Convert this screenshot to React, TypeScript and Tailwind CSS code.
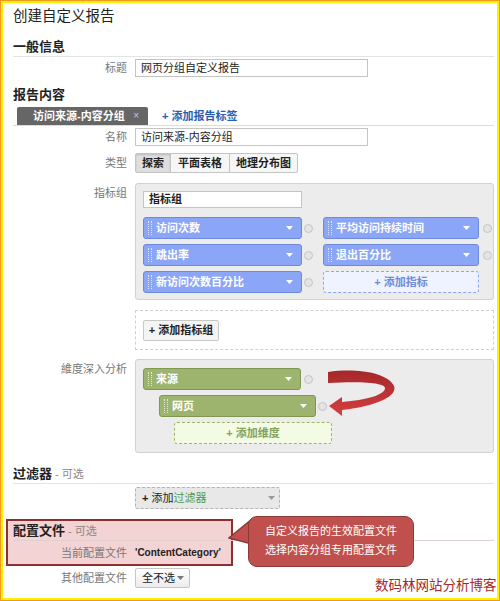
import React from "react";

// --- DATA ---
const METRICS_LEFT = ["访问次数", "跳出率", "新访问次数百分比"];
const METRICS_RIGHT = ["平均访问持续时间", "退出百分比"];

function Caret({ color = "#ffffff" }: { color?: string }) {
  return (
    <svg width="7" height="4" viewBox="0 0 7 4" className="shrink-0">
      <path d="M0 0h7L3.5 4z" fill={color} />
    </svg>
  );
}

function Grip() {
  return <div className="h-[14px] w-[4px] shrink-0 border-x border-dotted border-white/70" />;
}

function Knob() {
  return <div className="h-[9px] w-[9px] shrink-0 rounded-full border border-[#c4c4c4] bg-[#e4e4e4]" />;
}

function Label({ children, className = "" }: { children: React.ReactNode; className?: string }) {
  return (
    <div className={`w-[114px] shrink-0 text-right text-[11px] leading-[18px] text-[#777] ${className}`}>
      {children}
    </div>
  );
}

function MetricPill({ label, wide }: { label: string; wide: boolean }) {
  return (
    <div
      className={`flex h-[22px] items-center rounded-[3px] border border-[#6d89da] bg-[#8ba6f6] pl-[4px] pr-[8px] ${
        wide ? "w-[159px]" : "w-[156px]"
      }`}
    >
      <Grip />
      <span className="ml-[4px] flex-1 text-[11px] font-bold leading-none text-white">{label}</span>
      <Caret />
    </div>
  );
}

function DimPill({ label, className }: { label: string; className: string }) {
  return (
    <div className={`flex h-[22px] items-center rounded-[3px] border border-[#7e9851] bg-[#9db46e] pl-[4px] pr-[8px] ${className}`}>
      <Grip />
      <span className="ml-[4px] flex-1 text-[11px] font-bold leading-none text-white">{label}</span>
      <Caret />
    </div>
  );
}

export default function App() {
  return (
    <div className="h-[601px] w-[500px] border border-[#f39a1e] bg-white font-['Liberation_Sans','Noto_Sans_CJK_SC',sans-serif] text-[#222]">
      <div className="relative h-full border-2 border-[#fff100] pl-[10px] pr-[3px]">
        {/* --- 标题 --- */}
        <div className="mt-[3px] text-[14.5px] leading-[20px]">创建自定义报告</div>

        {/* --- 一般信息 --- */}
        <div className="mt-[12px] border-b border-[#e3e3e3] text-[13px] font-bold leading-[18px]">一般信息</div>
        <div className="mt-[2px] flex items-center">
          <Label>标题</Label>
          <div className="ml-[8px] flex h-[18px] w-[233px] items-center border border-[#c4c4c4] bg-white pl-[5px] text-[11px]">
            网页分组自定义报告
          </div>
        </div>

        {/* --- 报告内容 --- */}
        <div className="mt-[9px] text-[13px] font-bold leading-[18px]">报告内容</div>
        <div className="mt-[3px] flex h-[19px] items-start border-b border-[#dcdcdc]">
          <div className="ml-[4px] flex h-[18px] w-[131px] items-center rounded-t-[2px] bg-[#666666] pl-[16px] pr-[9px]">
            <span className="flex-1 text-[11px] font-bold leading-none text-white">访问来源-内容分组</span>
            <span className="text-[10px] leading-none text-[#c8c8c8]">×</span>
          </div>
          <div className="ml-[14px] flex h-[18px] items-center text-[11px] font-bold text-[#2a5db0]">+ 添加报告标签</div>
        </div>

        <div className="mt-[2px] flex items-center">
          <Label>名称</Label>
          <div className="ml-[8px] flex h-[18px] w-[233px] items-center border border-[#c4c4c4] bg-white pl-[5px] text-[11px]">
            访问来源-内容分组
          </div>
        </div>

        <div className="mt-[7px] flex items-center">
          <Label>类型</Label>
          <div className="ml-[8px] flex h-[20px] text-[11px] font-bold">
            <div className="flex items-center rounded-l-[2px] border border-[#c4c4c4] bg-[#dedede] px-[6px] shadow-[inset_0_1px_2px_rgba(0,0,0,0.15)]">探索</div>
            <div className="-ml-px flex items-center border border-[#c4c4c4] bg-[#f6f6f6] px-[7px]">平面表格</div>
            <div className="-ml-px flex items-center rounded-r-[2px] border border-[#c4c4c4] bg-[#f6f6f6] px-[6px]">地理分布图</div>
          </div>
        </div>

        {/* --- 指标组 --- */}
        <div className="mt-[10px] flex items-start">
          <Label className="pt-[1px]">指标组</Label>
          <div className="ml-[8px] flex-1 rounded-[3px] border border-[#d2d2d2] bg-[#ececec] pb-[6px] pl-[7px] pt-[7px]">
            <div className="flex h-[17px] w-[159px] items-center border border-[#c4c4c4] bg-white pl-[5px] text-[11px] font-bold">
              指标组
            </div>
            <div className="mt-[9px] flex flex-col gap-[5px]">
              {METRICS_LEFT.map((m, i) => (
                <div key={m} className="flex items-center">
                  <MetricPill label={m} wide />
                  <div className="ml-[2px] mr-[10px]">
                    <Knob />
                  </div>
                  {METRICS_RIGHT[i] ? (
                    <>
                      <MetricPill label={METRICS_RIGHT[i]} wide={false} />
                      <div className="ml-[4px]">
                        <Knob />
                      </div>
                    </>
                  ) : (
                    <div className="flex h-[22px] w-[156px] items-center justify-center rounded-[3px] border border-dashed border-[#8ba6f6] bg-[#eff3ff] text-[11px] font-bold text-[#6f8ad6]">
                      + 添加指标
                    </div>
                  )}
                </div>
              ))}
            </div>
          </div>
        </div>

        <div className="ml-[122px] mt-[10px] border border-dashed border-[#cfcfcf] pb-[8px] pl-[7px] pt-[9px]">
          <div className="flex h-[21px] w-[76px] items-center justify-center rounded-[2px] border border-[#c8c8c8] bg-[#f4f4f4] text-[11px] font-bold">
            + 添加指标组
          </div>
        </div>

        {/* --- 維度深入分析 --- */}
        <div className="mt-[9px] flex items-start">
          <Label className="pt-[1px]">維度深入分析</Label>
          <div className="ml-[8px] flex-1 rounded-[3px] border border-[#d2d2d2] bg-[#ececec] pb-[8px] pl-[7px] pt-[8px]">
            <div className="flex items-center">
              <DimPill label="来源" className="w-[158px]" />
              <div className="ml-[3px]">
                <Knob />
              </div>
            </div>
            <div className="ml-[16px] mt-[5px] flex items-center">
              <DimPill label="网页" className="w-[157px]" />
              <div className="ml-[2px]">
                <Knob />
              </div>
            </div>
            <div className="ml-[31px] mt-[5px] flex h-[22px] w-[158px] items-center justify-center rounded-[3px] border border-dashed border-[#9db46e] bg-[#f3fbe4] text-[11px] font-bold text-[#86a25a]">
              + 添加维度
            </div>
          </div>
        </div>

        {/* --- 过滤器 --- */}
        <div className="mt-[11px] border-b border-[#e3e3e3] leading-[18px]">
          <span className="text-[13px] font-bold">过滤器</span>
          <span className="text-[11px] text-[#888]"> - 可选</span>
        </div>
        <div className="ml-[122px] mt-[3px] flex h-[22px] w-[145px] items-center rounded-[2px] border border-dashed border-[#b4b4b4] bg-[#e8e8e8] pl-[6px] pr-[4px] text-[11px]">
          <span className="flex-1">
            <span className="font-bold">+ </span>添加<span className="text-[#4b9a4b]">过滤器</span>
          </span>
          <Caret color="#9a9a9a" />
        </div>

        {/* --- 配置文件 (highlight behind) --- */}
        <div className="absolute left-[3px] top-[516px] h-[47px] w-[227px] border-2 border-[#8e2f2f] bg-[#f3d3d3]" />

        <div className="relative mt-[12px] border-b border-[#e2d0d0] leading-[18px]">
          <span className="text-[13px] font-bold">配置文件</span>
          <span className="text-[11px] text-[#888]"> - 可选</span>
        </div>
        <div className="relative mt-[3px] flex items-center">
          <Label>当前配置文件</Label>
          <div className="ml-[8px] text-[10px] font-bold leading-[18px]">'ContentCategory'</div>
        </div>
        <div className="mt-[6px] flex items-center">
          <Label>其他配置文件</Label>
          <div className="ml-[8px] flex h-[20px] w-[55px] items-center rounded-[2px] border border-[#c6c6c6] bg-gradient-to-b from-white to-[#ececec] pl-[6px] pr-[5px] text-[11px]">
            <span className="flex-1">全不选</span>
            <Caret color="#777777" />
          </div>
        </div>

        {/* --- callout --- */}
        <svg className="absolute left-[225px] top-[513px]" width="26" height="32" viewBox="0 0 26 32">
          <polygon points="24,3 1,22 24,28" fill="#c0504d" stroke="#8c3a38" strokeWidth="1.5" />
        </svg>
        <div className="absolute left-[245px] top-[513px] h-[51px] w-[166px] rounded-[9px] border-[1.5px] border-[#8c3a38] bg-[#c0504d] pt-[5px] text-center text-[11px] leading-[19px] text-white">
          <div>自定义报告的生效配置文件</div>
          <div>选择内容分组专用配置文件</div>
        </div>

        {/* --- red arrow --- */}
        <svg className="absolute left-[322px] top-[365px]" width="76" height="55" viewBox="0 0 76 55">
          <defs>
            <linearGradient id="rib" x1="0" y1="0" x2="0" y2="1">
              <stop offset="0" stopColor="#a5282b" />
              <stop offset="1" stopColor="#d4403f" />
            </linearGradient>
          </defs>
          <path
            d="M3,4 C30,0 62,4 69,18 C73,28 52,38 17,42 L17,48 L4,38 L17,29 L17,34 C42,32 58,27 60,21 C62,15 40,13 3,15 Z"
            fill="url(#rib)"
          />
        </svg>

        {/* --- watermark --- */}
        <div className="absolute left-[372px] top-[574px] whitespace-nowrap text-[13.5px] leading-[18px] text-[#a3282c]">
          数码林网站分析博客
        </div>
      </div>
    </div>
  );
}
